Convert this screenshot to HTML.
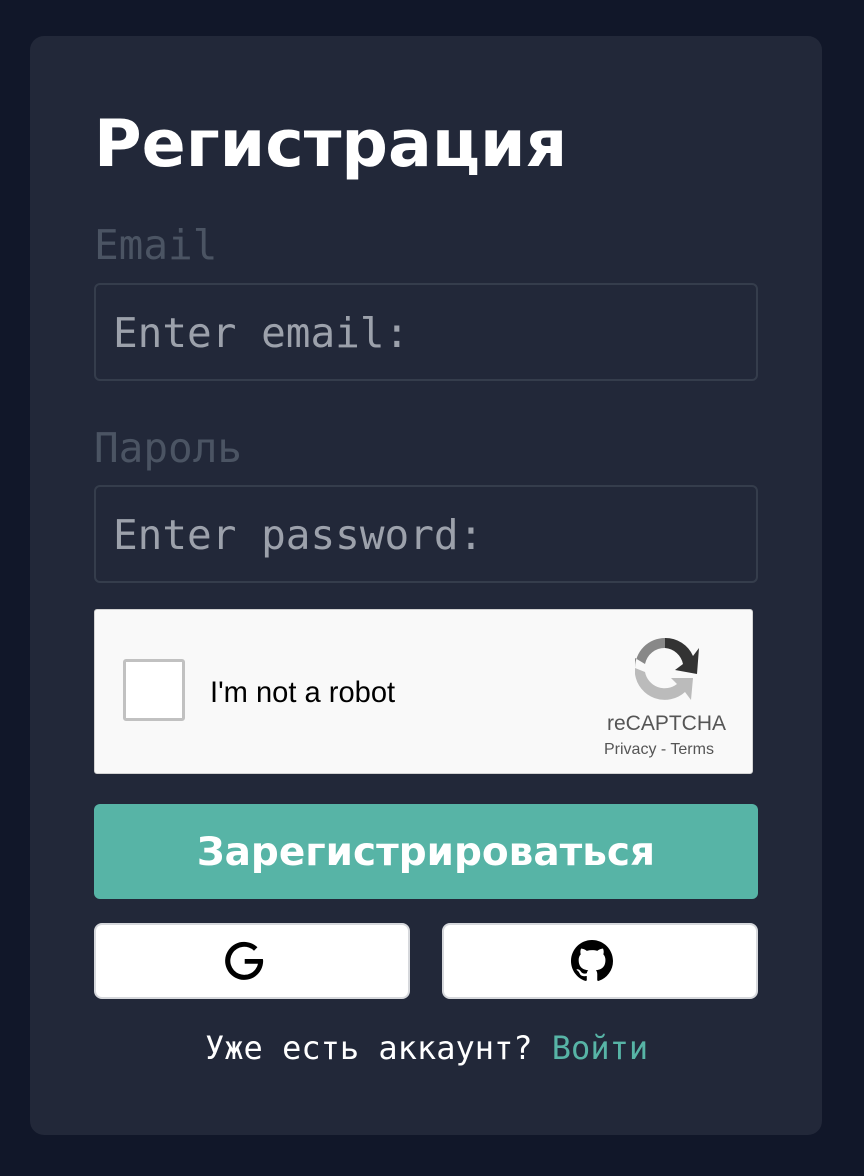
<!DOCTYPE html>
<html><head><meta charset="utf-8"><style>
*{margin:0;padding:0;box-sizing:border-box}
body{width:864px;height:1176px;background:#111729;position:relative;overflow:hidden;font-family:"DejaVu Sans Mono","Liberation Mono",monospace}
.card{position:absolute;left:30px;top:36px;width:792px;height:1099px;background:#222839;border-radius:14px}
.abs{position:absolute}
h1{position:absolute;left:94px;top:100px;font-family:"DejaVu Sans","Liberation Sans",sans-serif;font-weight:bold;font-size:65px;color:#fff;line-height:90px}
.lbl{position:absolute;left:94px;font-size:41px;color:#4b5463;line-height:50px}
.inp{position:absolute;left:94px;width:664px;height:98px;border:2px solid #353d4c;border-radius:6px;background:#222839;color:#9ca1ab;font-size:41px;line-height:96px;padding-left:17px}
.cap{position:absolute;left:94px;top:609px;width:659px;height:165px;background:#f9f9f9;border:1px solid #d3d3d3;border-radius:3px;font-family:"Liberation Sans",Arial,sans-serif}
.btn{position:absolute;left:94px;top:804px;width:664px;height:95px;background:#57b4a6;border-radius:6px;color:#fff;font-family:"DejaVu Sans","Liberation Sans",sans-serif;font-weight:bold;font-size:39px;text-align:center;line-height:98px}
.sb{position:absolute;top:923px;width:316px;height:76px;background:#fff;border:2px solid #d6d8dc;border-radius:8px;display:flex;align-items:center;justify-content:center;padding-right:16px}
</style></head><body>
<div class="card"></div>
<h1>Регистрация</h1>
<div class="lbl" style="top:220px">Email</div>
<div class="inp" style="top:283px">Enter email:</div>
<div class="lbl" style="top:423px">Пароль</div>
<div class="inp" style="top:485px">Enter password:</div>
<div class="cap">
  <div class="abs" style="left:28px;top:49px;width:62px;height:62px;background:#fff;border:3px solid #c1c1c1;border-radius:3px"></div>
  <div class="abs" style="left:115px;top:66px;font-size:30px;color:#000;transform:scaleX(0.97);transform-origin:left">I'm not a robot</div>
  <svg class="abs" style="left:536px;top:24px" width="68" height="68" viewBox="0 0 68 68">
    <path d="M34 4 A30 30 0 0 1 62 22 L68 14 L66 40 L44 36 L52 30 A20 20 0 0 0 34 14 Z" fill="#333"/>
    <path d="M4 34 A30 30 0 0 1 34 4 L34 14 A20 20 0 0 0 14 30 L4 24 Z" fill="#888"/>
    <path d="M4 34 L14 38 A20 20 0 0 0 46 50 L40 44 L62 44 L60 66 L54 58 A30 30 0 0 1 4 40 Z" fill="#bbb"/>
  </svg>
  <div class="abs" style="left:512px;top:102px;font-size:21px;color:#555">reCAPTCHA</div>
  <div class="abs" style="left:509px;top:131px;font-size:16px;color:#555">Privacy - Terms</div>
</div>
<div class="btn">Зарегистрироваться</div>
<div class="sb" style="left:94px">
  <svg width="40" height="40" viewBox="6 6 28 28"><path d="M33.2 18.6H20.5v3.3h9.3A9.8 9.8 0 1 1 27 12.8l2.4-2.4A13.3 13.3 0 1 0 33.4 20c0-.5-.1-1-.2-1.4z" fill="#000"/></svg>
</div>
<div class="sb" style="left:442px">
  <svg width="42" height="42" viewBox="0 0 16 16"><path fill="#000" d="M8 0C3.58 0 0 3.58 0 8c0 3.54 2.29 6.53 5.47 7.59.4.07.55-.17.55-.38 0-.19-.01-.82-.01-1.49-2.01.37-2.530-.49-2.69-.94-.09-.23-.48-.94-.82-1.13-.28-.15-.68-.52-.01-.53.63-.01 1.08.58 1.23.82.72 1.21 1.87.87 2.33.66.07-.52.28-.87.51-1.07-1.78-.2-3.64-.89-3.64-3.95 0-.87.31-1.59.82-2.15-.08-.2-.36-1.02.08-2.12 0 0 .67-.21 2.2.82.64-.18 1.32-.27 2-.27.68 0 1.36.09 2 .27 1.53-1.04 2.2-.82 2.2-.82.44 1.1.16 1.92.08 2.12.51.56.82 1.27.82 2.15 0 3.07-1.87 3.75-3.65 3.95.29.25.54.73.54 1.48 0 1.07-.01 1.93-.01 2.2 0 .21.15.46.55.38A8.013 8.013 0 0016 8c0-4.42-3.58-8-8-8z"/></svg>
</div>
<div class="abs" style="left:205px;top:1028px;font-size:32px;color:#fff;line-height:40px;white-space:nowrap">Уже есть аккаунт? <span style="color:#57b4a6">Войти</span></div>
</body></html>
